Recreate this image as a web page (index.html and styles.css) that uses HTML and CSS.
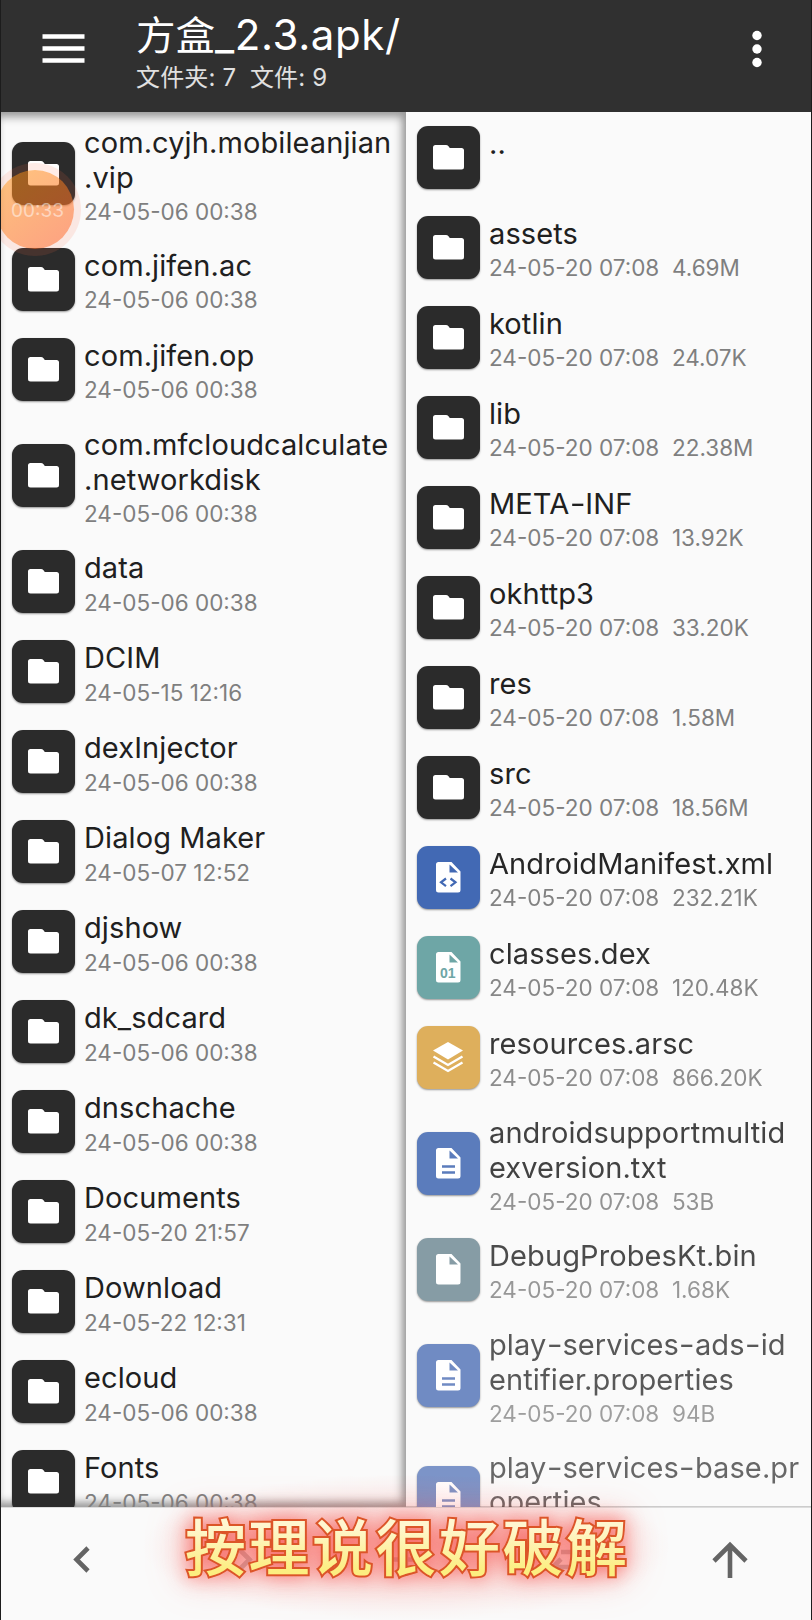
FILE: index.html
```
<!DOCTYPE html>
<html lang="zh-CN">
<head>
<meta charset="utf-8">
<title>方盒_2.3.apk/</title>
<link rel="stylesheet" href="styles.css">
</head>
<body>
<svg width="0" height="0" class="defs">
  <symbol id="folder" viewBox="0 0 63 63"><path d="M18.500 19h10.500q1.500 0 2.300 1l1.500 2h11.700q2.500 0 2.500 2.500v16.500q0 2.500-2.500 2.500h-26q-2.500 0-2.500-2.500v-19.500q0-2.500 2.500-2.500z"/></symbol>
  <symbol id="file" viewBox="0 0 63 63"><path fill-rule="evenodd" d="M21.500 16h13l9 9.500v18.500q0 2.500-2.500 2.500h-19.500q-2.500 0-2.500-2.500v-25.500q0-2.500 2.500-2.500zM32.500 18.500v8h8.500z"/></symbol>
  <symbol id="layers" viewBox="0 0 63 63"><path d="M31 16l15 8.500-15 9-15-9z"/><path d="M16.500 30.500l14.500 8.500 14.500-8.500M16.500 36.500l14.500 8.500 14.500-8.500" fill="none" stroke="#fff" stroke-width="2.300"/></symbol>
</svg>
<div class="app">
  <header class="bar">
    <svg class="menu" viewBox="0 0 42 29"><path d="M0 2.500h42M0 14.500h42M0 26.500h42" stroke="#fff" stroke-width="4.600"/></svg>
    <div class="heading"><h1>方盒<span class="latin">_2.3.apk/</span></h1><p>文件夹: 7&nbsp; 文件: 9</p></div>
    <svg class="more" viewBox="0 0 10 38"><circle cx="5" cy="5.500" r="4.700"/><circle cx="5" cy="19" r="4.700"/><circle cx="5" cy="32.500" r="4.700"/></svg>
  </header>
  <main class="panes">
    <section class="pane left" id="left"></section>
    <section class="pane right" id="right"></section>
  </main>
  <footer class="nav">
    <svg viewBox="0 0 812 113">
      <g fill="none" stroke="#646464" stroke-width="4.600">
        <path d="M88 40L76.500 51.500L88 63"/>
        <g opacity=".4">
          <path d="M238 40L249.500 51.500L238 63"/>
          <path d="M390 51.500h32M406 35.500v32"/>
          <path d="M576 44h-15M553 59h24M561 51l-8 8 8 8"/>
        </g>
        <path d="M730 70V38M714 53L730 37L746 53"/>
      </g>
    </svg>
  </footer>
  <div class="timer"><span>00:33</span></div>
  <div class="haze"></div>
  <svg class="caption" viewBox="0 0 812 220">
    <defs><linearGradient id="gold" x1="0" y1="0" x2="0" y2="1"><stop offset=".3" stop-color="#fff6d0"/><stop offset=".8" stop-color="#fcee80"/></linearGradient></defs>
    <text x="185" y="170.500" textLength="442" fill="url(#gold)">按理说很好破解</text>
  </svg>
</div>
<script src="app.js"></script>
</body>
</html>
```
FILE: styles.css
```
* { box-sizing: border-box; }
body { margin: 0; font-family: Inter, "Noto Sans CJK SC", sans-serif; background: #fafafa; }
.defs { position: absolute; }
.app { position: relative; width: 812px; height: 1620px; overflow: hidden; display: flex; flex-direction: column; border-left: 1px solid #1c1c1c; border-right: 1px solid #1c1c1c; background: #fafafa; }
.bar { height: 112px; flex: none; background: #303030; color: #fff; display: flex; align-items: flex-start; padding-left: 41px; }
.menu { width: 43px; height: 29px; margin-top: 34px; }
.heading { margin-left: 51px; flex: 1; }
h1 { margin: 8px 0 0; font-size: 39.500px; font-weight: 400; line-height: 50px; font-family: "Noto Sans CJK SC", sans-serif; white-space: nowrap; }
.latin { font-family: Inter, sans-serif; font-weight: 400; font-size: 42px; letter-spacing: .6px; }
.heading p { margin: 2px 0 0; font-size: 24px; letter-spacing: .15px; line-height: 32px; color: #e0e0e0; white-space: nowrap; }
.more { width: 10px; height: 38px; margin: 30px 49px 0 0; fill: #fff; }
.panes { height: 1395px; flex: none; display: flex; overflow: hidden; }
.pane { overflow: hidden; }
.left { width: 405px; box-shadow: inset 0 10px 9px -5px #999, inset -10px 0 9px -6px #999, inset 0 -10px 9px -5px #999; }
.right { flex: 1; box-shadow: 0 -1px 0 #ccc inset; }
.row { display: flex; height: 90px; padding: 13.800px 0 0 11px; }
.row.tall { height: 122.300px; padding-top: 13.300px; }
.tile { flex: none; width: 63px; height: 63px; margin-right: 9px; border-radius: 11px; background: #2b2b2b; box-shadow: 0 1px 2px rgba(0,0,0,.4); fill: #fff; }
.tall .tile { margin-top: 16.500px; }
.xml { background: #4269b4; } .dex { background: #6ea6a6; } .arsc { background: #deaf5c; }
.txt { background: #5b7cbc; } .bin { background: #869ca5; } .prop { background: #708bc3; } .prop2 { background: #7c94c8; }
.name { padding-top: .8px; font-size: 29px; letter-spacing: .1px; line-height: 34.400px; color: #202020; white-space: pre; }
.dash { display: inline-block; line-height: 1; transform: scaleX(1.2); margin: 0 1.300px; }
.meta { margin-top: 3px; font-size: 22.500px; line-height: 27px; color: #7f7f7f; white-space: pre; }
.badge { font: 600 14px "Liberation Sans", sans-serif; }
.nav { height: 113px; flex: none; border-top: 1px solid #ddd; margin-left: -1px; }
.nav svg { display: block; width: 812px; height: 113px; }
.timer { position: absolute; left: -5px; top: 170px; width: 78px; height: 79px; border-radius: 50%; background: linear-gradient(140deg, rgba(255,150,20,.55), rgba(255,100,50,.6)); box-shadow: 0 0 0 7px rgba(255,110,70,.13); color: rgba(255,255,255,.5); font-size: 19px; line-height: 82px; padding-left: 15px; }
.haze { position: absolute; left: 140px; top: 1474px; width: 530px; height: 146px; background: radial-gradient(closest-side, rgba(245,90,80,.22), rgba(245,90,80,.06) 75%, transparent); }
.caption { position: absolute; left: -1px; bottom: 0; width: 812px; height: 220px; overflow: visible; }
.caption text { font: 500 61px "Noto Sans CJK SC", sans-serif; stroke: #dc5528; stroke-width: 4px; paint-order: stroke; filter: drop-shadow(0 0 9px rgba(245,65,60,.6)) drop-shadow(0 0 18px rgba(250,80,70,.4)); }
```
FILE: app.js
```
const d = '24-05-06 00:38';
const left = [
  ['com.cyjh.mobileanjian\n.vip', d], ['com.jifen.ac', d], ['com.jifen.op', d],
  ['com.mfcloudcalculate\n.networkdisk', d], ['data', d], ['DCIM', '24-05-15 12:16'],
  ['dexInjector', d], ['Dialog Maker', '24-05-07 12:52'], ['djshow', d], ['dk_sdcard', d],
  ['dnschache', d], ['Documents', '24-05-20 21:57'], ['Download', '24-05-22 12:31'],
  ['ecloud', d], ['Fonts', d]
];
const t = '24-05-20 07:08  ';
const right = [
  ['..', ''], ['assets', t + '4.69M'], ['kotlin', t + '24.07K'], ['lib', t + '22.38M'],
  ['META-INF', t + '13.92K'], ['okhttp3', t + '33.20K'], ['res', t + '1.58M'], ['src', t + '18.56M'],
  ['AndroidManifest.xml', t + '232.21K', 'xml', .97], ['classes.dex', t + '120.48K', 'dex', .93],
  ['resources.arsc', t + '866.20K', 'arsc', .89], ['androidsupportmultid\nexversion.txt', t + '53B', 'txt', .84],
  ['DebugProbesKt.bin', t + '1.68K', 'bin', .8], ['play-services-ads-id\nentifier.properties', t + '94B', 'prop', .74],
  ['play-services-base.pr\noperties', '', 'prop2', .67]
];
const lines = c => `<path d="M25 34.500h13M25 40.500h13" stroke="${c}" stroke-width="2.600"/>`;
const marks = {
  xml: '<path d="M29 32.500l-5 3.800 5 3.800M33.500 32.500l5 3.800-5 3.800" fill="none" stroke="#4269b4" stroke-width="2.200"/>',
  dex: '<text class="badge" x="23" y="42" textLength="15.500" fill="#6ea6a6">01</text>',
  txt: lines('#5b7cbc'), prop: lines('#708bc3'), prop2: lines('#7c94c8')
};
function render(id, items) {
  document.getElementById(id).innerHTML = items.map(([name, meta, kind = 'folder', fade = 1]) => {
    const shape = kind === 'folder' ? 'folder' : kind === 'arsc' ? 'layers' : 'file';
    const label = name.replace(/-/g, '<span class="dash">-</span>');
    return `<div class="row ${name.includes('\n') ? 'tall' : ''}"><svg class="tile ${kind}" viewBox="0 0 63 63"><use href="#${shape}"/>${marks[kind] || ''}</svg><div style="opacity:${fade}"><div class="name">${label}</div><div class="meta">${meta}</div></div></div>`;
  }).join('');
}
render('left', left);
render('right', right);
```
